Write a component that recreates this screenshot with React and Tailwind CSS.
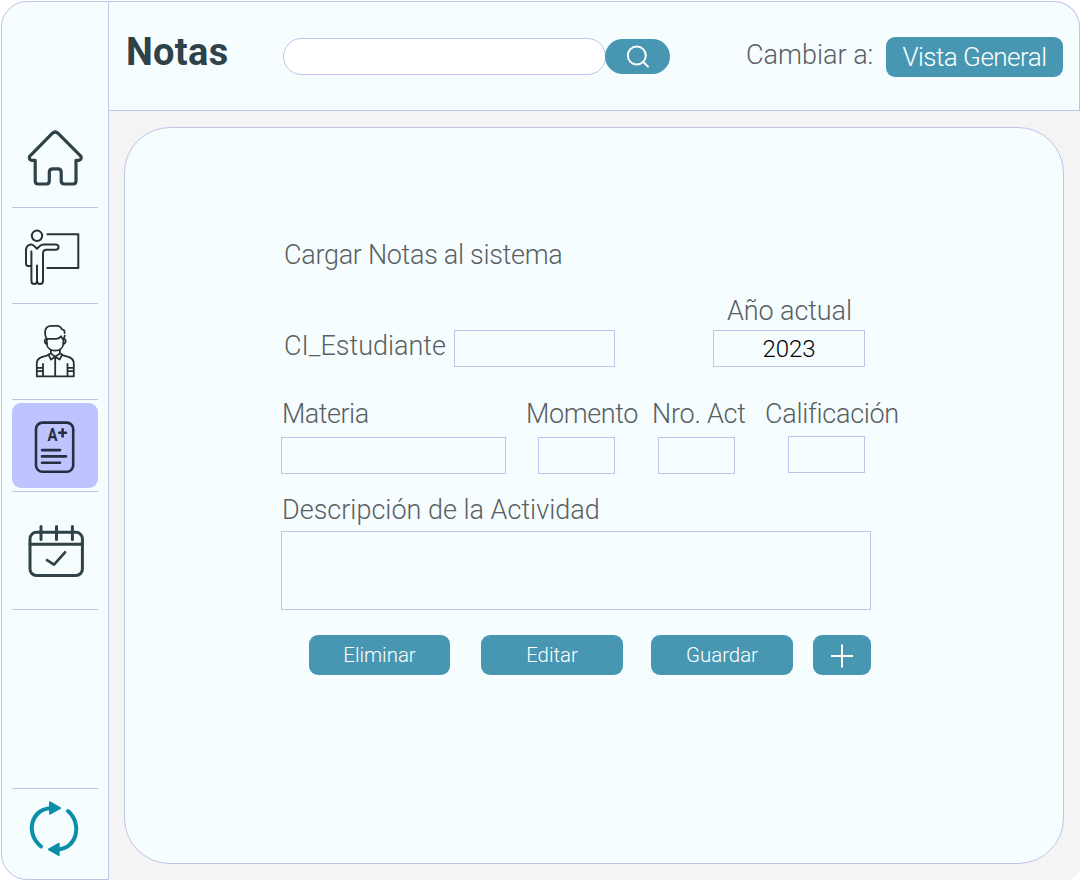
import React from "react";

const label = "block whitespace-nowrap text-[27px] leading-[36px] font-light text-[#5a6062]";
const field = "block shrink-0 border border-[#c0c3ea] bg-transparent outline-none";
const action = "flex h-[40px] items-center justify-center rounded-[9px] bg-[#4797b3] pt-px text-[20.4px] font-light text-white";

function HomeIcon() {
  return (
    <svg width="60" height="60" viewBox="25 128 60 60" fill="none" stroke="#2f4247" strokeWidth="3.2" strokeLinecap="round" strokeLinejoin="round">
      <path d="M52.5 133.2Q55.2 130.8 57.9 133.2L81 156.3Q82 160 78.5 160.3H76V181Q76 184 73 184H64.5Q61.2 184 61.2 181V172Q61.2 168.8 58 168.8H53Q49.3 168.8 49.3 172V181Q49.3 184 46.3 184H38.3Q35.2 184 35.2 181V160.3H32Q28.4 160 29.6 156.3Z" />
    </svg>
  );
}

function TeacherIcon() {
  return (
    <svg width="60" height="60" viewBox="22 228 60 60" fill="none" stroke="#293337" strokeWidth="2" strokeLinecap="round" strokeLinejoin="round">
      <circle cx="37" cy="235.8" r="5.2" />
      <path d="M47.4 234.2H78.3V268H47.4" />
      <path d="M31.4 251.5V280.5C31.4 285.3 37 285.3 37 280.5V265.5V280.5C37 285.3 43 285.3 43 280.5V253.5Q43 249.8 46.5 249.8H55.5C59.6 249.8 59.6 244.4 55.5 244.4H43.5Q41.5 244.4 40 245.9L37 248.8L34 245.9Q32.5 244.4 30.8 244.5Q26 245.2 26 250.5V263.5Q26 266 28.5 266H31.2" />
    </svg>
  );
}

function StudentIcon() {
  return (
    <svg width="44" height="56" viewBox="33 323 44 56" fill="none" stroke="#273034" strokeWidth="1.8" strokeLinecap="round" strokeLinejoin="round">
      <path d="M46.7 339.3C44 338.4 44.1 343.6 47 343.7M63.3 339.3C67 338.4 66 344.2 63.2 343.7" />
      <path d="M46.6 338.8C44.7 336.3 45.1 334.6 45.1 332C45.3 327.5 48 325.9 51.5 325.9H58.3Q60.8 326.6 62 329.3Q65 329.6 64.6 333" />
      <path d="M46.6 338.8H56.5Q59 338.6 61 336.3Q61.8 338.6 63.6 339.2L64.8 335.7" />
      <path d="M46.8 339V344C47.6 352.8 62.5 352.8 63.4 344V339" />
      <path d="M50.9 350.3V353.6L55.2 356.8L59.9 353.6V350.3M50.9 353.2L48.4 354.6L51 359.6L55.2 356.8L59.6 359.6L62.2 354.6L59.9 353.2M55.2 356.8V376.3" />
      <path d="M48.4 355.2L41.5 357.2Q36.8 359 36.8 363.5V376.3H73.8V363.5Q73.8 359 69.2 357.2L62.2 355.2M43 364V376M67.5 364V376M37 367.9H43M37 371.1H43M67.5 367.9H73.5M67.5 371.1H73.5" />
    </svg>
  );
}

function GradesIcon() {
  return (
    <svg width="44" height="56" viewBox="33 419 44 56" fill="none" stroke="#272e40" strokeWidth="2.6" strokeLinecap="round" strokeLinejoin="round">
      <rect x="36" y="422.6" width="37.2" height="49.2" rx="6.5" />
      <text x="47.4" y="440.6" fontFamily="Roboto, sans-serif" fontWeight="700" fontSize="17.5" fill="#272e40" stroke="none" textLength="10" lengthAdjust="spacingAndGlyphs">A</text>
      <path d="M59.2 432.8H66M62.6 429.2V436.4M42 450.1H60M42 456.4H66M42 462.8H60" />
    </svg>
  );
}

function CalendarIcon() {
  return (
    <svg width="60" height="56" viewBox="26 523 60 56" fill="none" stroke="#2f4247" strokeWidth="3" strokeLinecap="round" strokeLinejoin="round">
      <rect x="30" y="532.3" width="52.4" height="43.2" rx="6.5" />
      <path d="M30 544.3H82.4M41 526.4V539.6M56.5 526.4V539.6M72.4 526.4V539.6" />
      <path d="M47 560.2L54 564.6L65 552.3" strokeWidth="2.7" />
    </svg>
  );
}

function SyncIcon() {
  return (
    <svg width="56" height="60" viewBox="26.5 799 56 60" fill="none" stroke="#0b8ea8" strokeWidth="4" strokeLinecap="round">
      <path d="M40.5 846.5C24 833 31 809 50 808.2M67.5 811C82.5 824 76 848.5 58 849.3" />
      <path d="M49.5 802.3L59.5 808.2L49.5 813.5ZM58.2 843.8L48.5 849.4L58.2 855Z" fill="#0b8ea8" strokeWidth="2" strokeLinejoin="round" />
    </svg>
  );
}

function NavItem({ className, children }) {
  return <a className={"flex justify-center border-b border-[#c0c3ea] " + className}>{children}</a>;
}

function Sidebar() {
  return (
    <nav className="flex h-[879px] w-[108px] shrink-0 flex-col rounded-l-[26px] border border-[#c0c3ea] bg-[#f5fdff] pr-[10px] pl-[10px]">
      <NavItem className="h-[206px] pt-[126px]"><HomeIcon /></NavItem>
      <NavItem className="h-[96px] pr-[6px] pt-[20px]"><TeacherIcon /></NavItem>
      <NavItem className="h-[96px] pt-[19px]"><StudentIcon /></NavItem>
      <NavItem className="h-[92px] pt-[3px]">
        <span className="flex h-[85px] w-[86px] items-start justify-center rounded-[9px] bg-[#bfc3ff] pt-[16px]"><GradesIcon /></span>
      </NavItem>
      <NavItem className="h-[118px] pl-[2px] pt-[31px]"><CalendarIcon /></NavItem>
      <NavItem className="h-[179px] pt-0" />
      <a className="flex justify-center pt-[10px]"><SyncIcon /></a>
    </nav>
  );
}

function Header() {
  return (
    <header className="flex h-[110px] items-start rounded-tr-[26px] border-t border-r border-b border-[#c0c3ea] bg-[#f5fdff]">
      <h1 className="mt-[28px] ml-[17px] w-[157px] whitespace-nowrap text-[38px] leading-[44px] font-bold tracking-[0.3px] text-[#2f4247]">Notas</h1>
      <input className="mt-[36px] h-[37px] w-[323px] rounded-full border border-[#c0c3ea] bg-white px-4 outline-none" />
      <button className="mt-[37px] -ml-px flex h-[35px] w-[65px] items-center justify-center rounded-full bg-[#4797b3]">
        <svg width="24" height="24" viewBox="0 0 24 24" fill="none" stroke="white" strokeWidth="2" strokeLinecap="round">
          <circle cx="10.8" cy="10.5" r="9" />
          <path d="M17.2 17L22 21.6" />
        </svg>
      </button>
      <span className="mt-[35px] ml-[76px] w-[140px] whitespace-nowrap text-[27px] leading-[36px] font-light text-[#5a6062]">Cambiar a:</span>
      <button className="mt-[35px] flex h-[40px] w-[177px] items-center justify-center rounded-[9px] bg-[#4797b3] text-[26px] font-light tracking-[-0.5px] text-white">Vista General</button>
    </header>
  );
}

function GradeForm() {
  return (
    <form className="ml-[156px] w-[640px] pt-[109px]">
      <h2 className={label + " ml-[3px] tracking-[-0.3px]"}>Cargar Notas al sistema</h2>
      <div className="mt-[20px] flex items-end">
        <span className={label + " mb-[3px] ml-[3px] w-[170px]"}>CI_Estudiante</span>
        <input className={field + " h-[37px] w-[161px]"} />
        <label className="ml-[98px] block w-[152px]">
          <span className={label + " ml-[14px] tracking-[-0.1px]"}>Año actual</span>
          <input className={field + " mt-px h-[37px] w-full text-center text-[24px] font-light text-black"} defaultValue="2023" />
        </label>
      </div>
      <div className="mt-[29px] flex items-start">
        <label className="block w-[245px]">
          <span className={label + " ml-[1px] tracking-[-0.5px]"}>Materia</span>
          <input className={field + " mt-[5px] h-[37px] w-[225px]"} />
        </label>
        <label className="block w-[126px]">
          <span className={label + " tracking-[-0.4px]"}>Momento</span>
          <input className={field + " mt-[5px] ml-[12px] h-[37px] w-[77px]"} />
        </label>
        <label className="block w-[113px]">
          <span className={label + " tracking-[-0.25px]"}>Nro. Act</span>
          <input className={field + " mt-[5px] ml-[6px] h-[37px] w-[77px]"} />
        </label>
        <label className="block">
          <span className={label + " tracking-[-0.3px]"}>Calificación</span>
          <input className={field + " mt-[4px] ml-[23px] h-[37px] w-[77px]"} />
        </label>
      </div>
      <label className="mt-[18px] block">
        <span className={label + " ml-[1px]"}>Descripción de la Actividad</span>
        <textarea className={field + " mt-[3px] h-[79px] w-[590px] resize-none"} />
      </label>
      <div className="mt-[25px] ml-[28px] flex">
        <button type="button" className={action + " w-[141px]"}>Eliminar</button>
        <button type="button" className={action + " ml-[31px] w-[142px]"}>Editar</button>
        <button type="button" className={action + " ml-[28px] w-[142px]"}>Guardar</button>
        <button type="button" className={action + " ml-[20px] w-[58px]"}>
          <svg width="24" height="24" viewBox="0 0 24 24" stroke="white" strokeWidth="2"><path d="M12 .5V23.5M1 12H23" /></svg>
        </button>
      </div>
    </form>
  );
}

export default function App() {
  return (
    <div className="flex h-[880px] w-[1080px] overflow-hidden bg-white pt-px pl-px font-[Roboto,sans-serif]">
      <Sidebar />
      <div className="flex w-[971px] flex-col rounded-tr-[26px] rounded-br-[14px] bg-[linear-gradient(to_bottom,transparent_100px,#f5f4f5_100px)]">
        <Header />
        <main className="mt-[16px] ml-[15px] h-[737px] w-[940px] rounded-[46px] border border-[#c0c3ea] bg-[#f5fdff]">
          <GradeForm />
        </main>
      </div>
    </div>
  );
}
